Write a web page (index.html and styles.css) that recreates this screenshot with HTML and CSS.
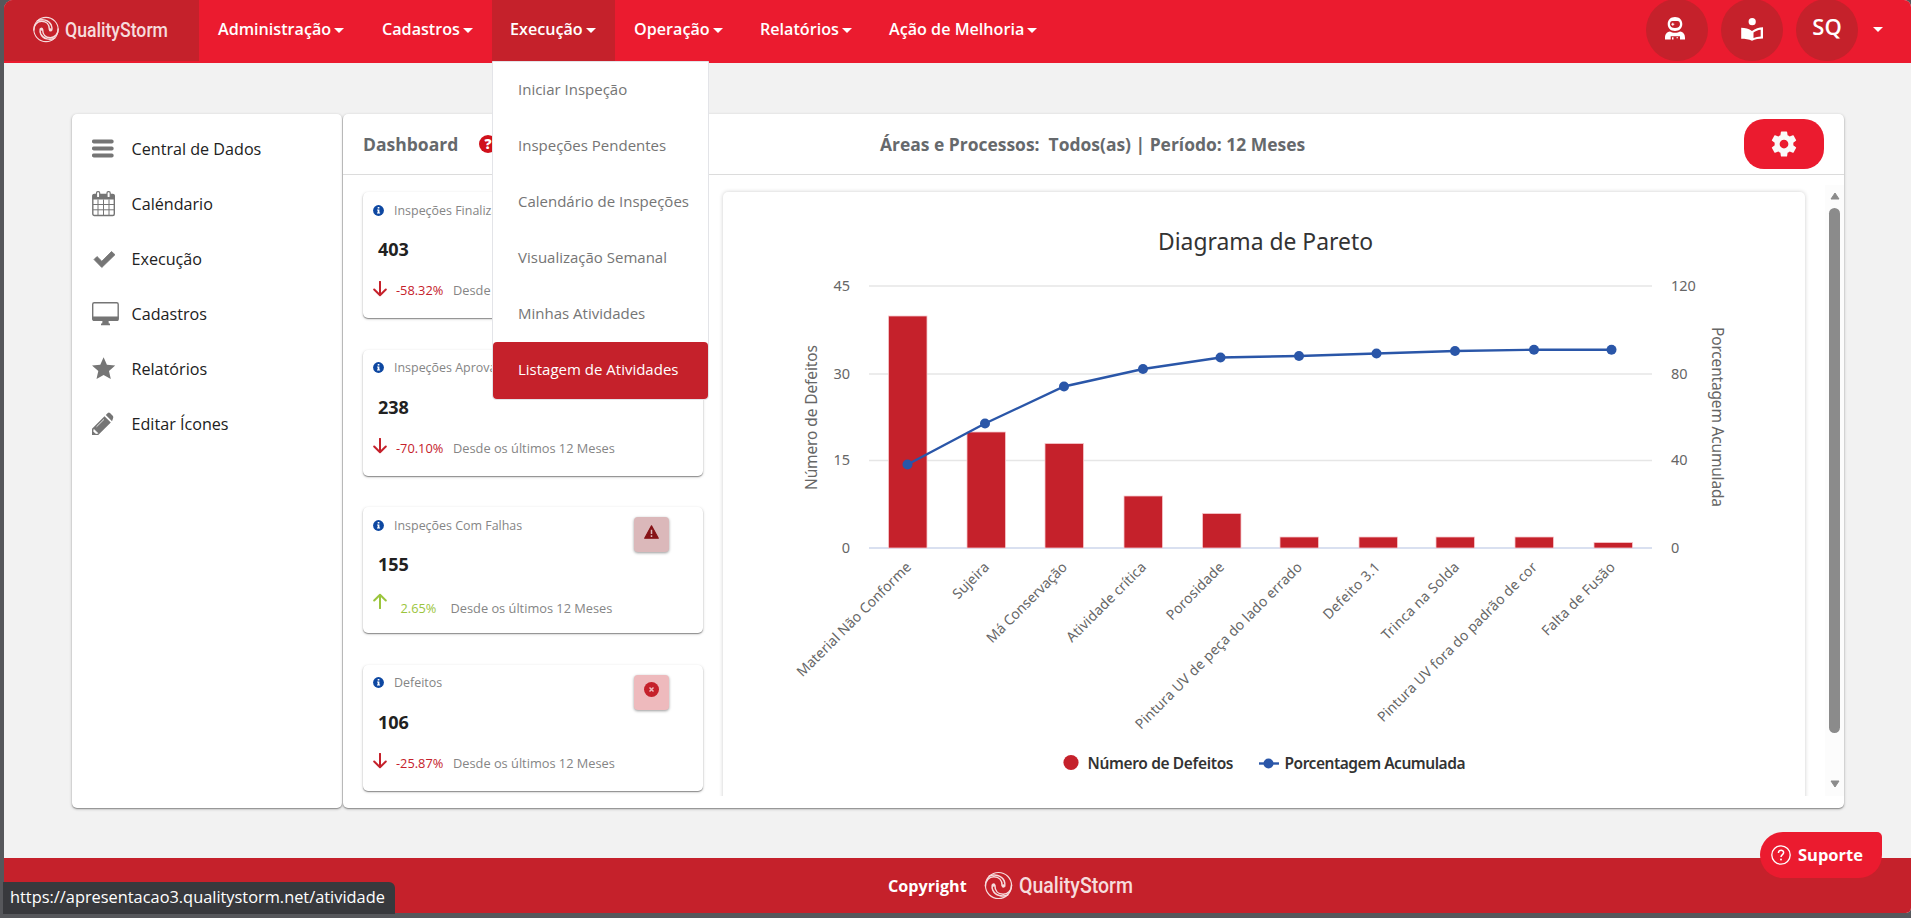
FILE: index.html
```
<!DOCTYPE html>
<html lang="pt-BR">
<head>
<meta charset="utf-8">
<title>QualityStorm</title>
<link rel="stylesheet" href="styles.css">
</head>
<body>
<svg class="defs" width="0" height="0">
  <symbol id="swirl" viewBox="0 0 28 28">
    <circle cx="14" cy="14" r="12.600" fill="none" stroke="currentColor" stroke-width="1.100"/>
    <g fill="none" stroke="currentColor" stroke-width="1.500" stroke-linecap="round">
      <path d="M1.400 14.500C1.400 9 5 5.500 9.500 5.500C14.500 5.500 17.500 9 17.500 14"/>
      <path d="M5 5C10 2.500 17 4 19.500 9.500C20.300 11.500 20.300 13 20 14.500"/>
      <path d="M26.600 13.500C26.600 19 23 22.500 18.500 22.500C13.500 22.500 10.500 19 10.500 14"/>
      <path d="M23 23C18 25.500 11 24 8.500 18.500C7.700 16.500 7.700 15 8 13.500"/>
    </g>
    <circle cx="9.300" cy="13.600" r="1.700" fill="currentColor"/><circle cx="18.700" cy="14.400" r="1.700" fill="currentColor"/>
  </symbol>
  <symbol id="info" viewBox="0 0 11 11">
    <circle cx="5.500" cy="5.500" r="5.400" fill="#0d47a1"/>
    <path d="M4.700 2h1.700v1.500H4.700zM4.100 4.400h2.300v3h.7v1.100H4V7.400h.7V5.500h-.6z" fill="#fff"/>
  </symbol>
  <symbol id="arrow" viewBox="0 0 14 16">
    <path d="M7 .8V14M1.200 8.500L7 14.300L12.800 8.500" fill="none" stroke="currentColor" stroke-width="2" stroke-linecap="round" stroke-linejoin="round"/>
  </symbol>
</svg>
<div class="window">
  <header class="navbar">
    <a class="brand"><svg class="swirl"><use href="#swirl"/></svg><svg class="word" width="112" height="34"><text x="0" y="21" textLength="103" lengthAdjust="spacingAndGlyphs">QualityStorm</text></svg></a>
    <nav class="menu">
      <a class="m1">Administração<i class="caret"></i></a>
      <a class="m2">Cadastros<i class="caret"></i></a>
      <div class="open"><a class="m3">Execução<i class="caret"></i></a>
        <ul class="dropdown">
          <li>Iniciar Inspeção</li>
          <li>Inspeções Pendentes</li>
          <li>Calendário de Inspeções</li>
          <li>Visualização Semanal</li>
          <li>Minhas Atividades</li>
          <li class="active">Listagem de Atividades</li>
        </ul>
      </div>
      <a class="m4">Operação<i class="caret"></i></a>
      <a class="m5">Relatórios<i class="caret"></i></a>
      <a class="m6">Ação de Melhoria<i class="caret"></i></a>
    </nav>
    <div class="tools">
      <span class="round"><svg width="20" height="24" viewBox="0 0 20 24" fill="#fff">
        <path fill-rule="evenodd" d="M10 0C14.400 0 17.300 2.800 17.300 7S14.400 14 10 14S2.700 11.200 2.700 7S5.600 0 10 0ZM7.500 4C5.900 4 5 5.200 5 7.300S6.600 11 10 11S15 9.400 15 7.300S14.100 4 12.500 4Z"/>
        <path d="M7.300 5.700h1v1h1v1h-1v1h-1v-1h-1v-1h1z"/>
        <path fill-rule="evenodd" d="M5 14.500C7.500 16.200 12.500 16.200 15 14.500C18.500 15 20 17.500 20 21V22.500H15V19.200H5.700V22.500H0V21C0 17.500 1.500 15 5 14.500Z"/>
        <path d="M7 20.200h1.500v2.300H7zM11.500 20.200h1.500v1h-1.500z"/>
      </svg></span>
      <span class="round"><svg width="22" height="23" viewBox="0 0 22 23">
        <circle cx="11.200" cy="3.700" r="3.600" fill="#fff"/>
        <path d="M.2 9.800C4 9.800 8 10.500 11 13C14 10.500 18 9.200 22 9.200V20.500C18 20.500 14 21.200 11 22.800C8 21.200 4 20.800 .2 20.800Z" fill="#fff"/>
        <path d="M12.500 14.500C14.500 13 17 12 19.700 11.700V18.400C17 18.500 14.600 19 12.500 20Z" fill="#c5212b"/>
      </svg></span>
      <span class="round sq">SQ</span>
      <i class="caret"></i>
    </div>
  </header>
  <main class="content">
    <aside class="sidebar">
      <a><svg width="28" height="28" viewBox="0 0 28 28"><path d="M1.800 6.500h18M1.800 13.500h18M1.800 20.500h18" stroke="#757575" stroke-width="3.800" stroke-linecap="round"/></svg>Central de Dados</a>
      <a><svg width="28" height="28" viewBox="0 0 28 28"><rect x=".8" y="4.500" width="21.500" height="21" rx="1.500" fill="#fff" stroke="#757575" stroke-width="1.400"/><path d="M.5 5h22v4.500H.5z" fill="#757575"/><path d="M6 9.500v15.500M11.500 9.500v15.500M17 9.500v15.500M1 14.500h21M1 19.800h21" stroke="#757575"/><rect x="4.500" y="1.700" width="3.200" height="6" rx="1.300" fill="#fff" stroke="#757575" stroke-width="1.200"/><rect x="15" y="1.700" width="3.200" height="6" rx="1.300" fill="#fff" stroke="#757575" stroke-width="1.200"/></svg>Caléndario</a>
      <a><svg width="28" height="28" viewBox="0 0 28 28"><path d="M2 14.500L5 11.500L9.800 16.200L19.500 6.500L23 9.700L9.800 22.500Z" fill="#757575" stroke="#757575" stroke-linejoin="round" stroke-width=".8"/></svg>Execução</a>
      <a><svg width="28" height="28" viewBox="0 0 28 28"><rect x=".7" y="2.700" width="25.500" height="17.600" rx="1.500" fill="#fff" stroke="#757575" stroke-width="1.400"/><path d="M.5 16.500h26V19.500q0 1.500-1.500 1.500H2Q.5 21 .5 19.500zM10.500 20.500h6l.3 3h1.200v1.800H9V23.500h1.200z" fill="#757575"/></svg>Cadastros</a>
      <a><svg width="28" height="28" viewBox="0 0 28 28"><path d="M11.600 2.200L14.900 9.800L23.200 10.600L17 16L18.800 24L11.600 19.900L4.500 24L6.300 16L0 10.600L8.300 9.800Z" fill="#757575"/></svg>Relatórios</a>
      <a><svg width="28" height="28" viewBox="0 0 28 28"><path d="M0 25V18.800L12.500 6.300L18.800 12.600L6.200 25ZM13.800 5L15.800 3Q17 2.200 18 3L21 6Q21.600 7.300 21 8.500L20 11.300Z" fill="#757575"/><path d="M2 19.500L5.800 23.300L4 23.500L1.700 21.500ZM4.500 16.800L12 9.400" stroke="#fff" fill="#fff" stroke-width=".8"/></svg>Editar Ícones</a>
    </aside>
    <section class="panel">
      <div class="panel-head">
        <h1>Dashboard</h1>
        <span class="help">?</span>
        <h2>Áreas e Processos:&nbsp; Todos(as) | Período: 12 Meses</h2>
        <button class="gear"><svg width="30" height="30" viewBox="0 0 24 24" fill="#fafafa"><path d="M12,15.500A3.500,3.500 0 0,1 8.500,12A3.500,3.500 0 0,1 12,8.500A3.500,3.500 0 0,1 15.500,12A3.500,3.500 0 0,1 12,15.500M19.430,12.970C19.470,12.650 19.500,12.330 19.500,12C19.500,11.670 19.470,11.340 19.430,11L21.540,9.370C21.730,9.220 21.780,8.950 21.660,8.730L19.660,5.270C19.540,5.050 19.270,4.960 19.050,5.050L16.560,6.050C16.040,5.660 15.500,5.320 14.870,5.070L14.500,2.420C14.460,2.180 14.250,2 14,2H10C9.750,2 9.540,2.180 9.500,2.420L9.130,5.070C8.500,5.320 7.960,5.660 7.440,6.050L4.950,5.050C4.730,4.960 4.460,5.050 4.340,5.270L2.340,8.730C2.210,8.950 2.270,9.220 2.460,9.370L4.570,11C4.530,11.340 4.500,11.670 4.500,12C4.500,12.330 4.530,12.650 4.570,12.970L2.460,14.630C2.270,14.780 2.210,15.050 2.340,15.270L4.340,18.730C4.460,18.950 4.730,19.030 4.950,18.950L7.440,17.940C7.960,18.340 8.500,18.680 9.130,18.930L9.500,21.580C9.540,21.820 9.750,22 10,22H14C14.250,22 14.460,21.820 14.500,21.580L14.870,18.930C15.500,18.670 16.040,18.340 16.560,17.940L19.050,18.950C19.270,19.030 19.540,18.950 19.660,18.730L21.660,15.270C21.780,15.050 21.730,14.780 21.540,14.630L19.430,12.970Z"/></svg></button>
      </div>
      <div class="panel-body">
        <div class="stats">
          <article class="stat">
            <div class="label"><svg><use href="#info"/></svg>Inspeções Finalizadas</div>
            <strong>403</strong>
            <div class="trend down"><svg><use href="#arrow"/></svg><b>-58.32%</b><span>Desde os últimos 12 Meses</span></div>
          </article>
          <article class="stat">
            <div class="label"><svg><use href="#info"/></svg>Inspeções Aprovadas</div>
            <strong>238</strong>
            <div class="trend down"><svg><use href="#arrow"/></svg><b>-70.10%</b><span>Desde os últimos 12 Meses</span></div>
          </article>
          <article class="stat">
            <div class="label"><svg><use href="#info"/></svg>Inspeções Com Falhas</div>
            <strong>155</strong>
            <div class="trend up"><svg><use href="#arrow"/></svg><b>2.65%</b><span>Desde os últimos 12 Meses</span></div>
            <div class="badge warn"><svg width="15" height="14" viewBox="0 0 15 14"><path d="M7.500 .8L14.300 13.200H.7Z" fill="#861317" stroke="#861317" stroke-width="1.200" stroke-linejoin="round"/><path d="M7.500 4.700v4.300M7.500 10.300v1.700" stroke="#dbb8ba" stroke-width="1.500"/></svg></div>
          </article>
          <article class="stat">
            <div class="label"><svg><use href="#info"/></svg>Defeitos</div>
            <strong>106</strong>
            <div class="trend down"><svg><use href="#arrow"/></svg><b>-25.87%</b><span>Desde os últimos 12 Meses</span></div>
            <div class="badge fail"><svg width="15" height="15" viewBox="0 0 15 15"><circle cx="7.500" cy="7.500" r="7.500" fill="#c5212b"/><path d="M5.500 5.500l4 4M9.500 5.500l-4 4" stroke="#eebabd" stroke-width="1.500"/></svg></div>
          </article>
        </div>
        <div class="chart-card">
          <svg class="chart" width="1082" height="612" viewBox="723 192 1082 612">
            <text class="title" x="1158" y="250" textLength="215" lengthAdjust="spacingAndGlyphs">Diagrama de Pareto</text>
            <path d="M869 286H1652M869 374H1652M869 460.500H1652" stroke="#e6e6e6" stroke-width="1.300"/>
            <path d="M869 548H1652" stroke="#ccd6eb" stroke-width="1.500"/>
            <g class="bars">
              <rect x="888.500" y="316" width="38.500" height="232"/>
              <rect x="967" y="432" width="38.500" height="116"/>
              <rect x="1045" y="443.500" width="38.500" height="104.500"/>
              <rect x="1124" y="496" width="38.500" height="52"/>
              <rect x="1202.500" y="513.500" width="38.500" height="34.500"/>
              <rect x="1280" y="537" width="38.500" height="11"/>
              <rect x="1359" y="537" width="38.500" height="11"/>
              <rect x="1436" y="537" width="38.500" height="11"/>
              <rect x="1515" y="537" width="38.500" height="11"/>
              <rect x="1594" y="542.500" width="38.500" height="5.500"/>
            </g>
            <path d="M907.500 464.500L985 423.500L1064 386.500L1143 369L1220.500 357.500L1299 356L1376.500 353.500L1455 351L1534 349.700L1611.500 349.700" fill="none" stroke="#2a56a8" stroke-width="2.400"/>
            <g fill="#2a56a8"><circle cx="907.500" cy="464.500" r="5"/><circle cx="985" cy="423.500" r="5"/><circle cx="1064" cy="386.500" r="5"/><circle cx="1143" cy="369" r="5"/><circle cx="1220.500" cy="357.500" r="5"/><circle cx="1299" cy="356" r="5"/><circle cx="1376.500" cy="353.500" r="5"/><circle cx="1455" cy="351" r="5"/><circle cx="1534" cy="349.700" r="5"/><circle cx="1611.500" cy="349.700" r="5"/></g>
            <g class="tick" text-anchor="end">
              <text x="850" y="291">45</text><text x="850" y="379">30</text><text x="850" y="465">15</text><text x="850" y="553">0</text>
            </g>
            <g class="tick">
              <text x="1671" y="291">120</text><text x="1671" y="379">80</text><text x="1671" y="465">40</text><text x="1671" y="553">0</text>
            </g>
            <g class="cat" text-anchor="end">
              <text transform="translate(912 568) rotate(-45)" textLength="155">Material Não Conforme</text>
              <text transform="translate(990 568) rotate(-45)" textLength="45">Sujeira</text>
              <text transform="translate(1068 568) rotate(-45)" textLength="107">Má Conservação</text>
              <text transform="translate(1147 568) rotate(-45)" textLength="106">Atividade crítica</text>
              <text transform="translate(1225 568) rotate(-45)" textLength="75">Porosidade</text>
              <text transform="translate(1303 568) rotate(-45)" textLength="229">Pintura UV de peça do lado errado</text>
              <text transform="translate(1381 568) rotate(-45)" textLength="74">Defeito 3.1</text>
              <text transform="translate(1460 568) rotate(-45)" textLength="103">Trinca na Solda</text>
              <text transform="translate(1538 568) rotate(-45)" textLength="219">Pintura UV fora do padrão de cor</text>
              <text transform="translate(1616 568) rotate(-45)" textLength="97">Falta de Fusão</text>
            </g>
            <text class="axis" transform="translate(817 490) rotate(-90)" textLength="145">Número de Defeitos</text>
            <text class="axis" transform="translate(1712 327) rotate(90)" textLength="180">Porcentagem Acumulada</text>
            <circle cx="1071" cy="762.500" r="7.600" fill="#c5212b"/>
            <text class="legend" x="1087.500" y="769" textLength="146">Número de Defeitos</text>
            <path d="M1259 763.500h20" stroke="#2a56a8" stroke-width="2.400"/><circle cx="1268.500" cy="763.500" r="5" fill="#2a56a8"/>
            <text class="legend" x="1284.500" y="769" textLength="181">Porcentagem Acumulada</text>
          </svg>
        </div>
        <div class="scrollbar">
          <svg width="10" height="8" viewBox="0 0 10 8"><path d="M5 1L9 7H1Z" fill="#8b8b8b" stroke="#8b8b8b" stroke-linejoin="round"/></svg>
          <i></i>
          <svg width="10" height="8" viewBox="0 0 10 8"><path d="M1 1H9L5 7Z" fill="#8b8b8b" stroke="#8b8b8b" stroke-linejoin="round"/></svg>
        </div>
      </div>
    </section>
  </main>
  <footer class="footer">
    <span>Copyright</span>
    <svg class="swirl big"><use href="#swirl"/></svg><svg class="word big" width="124" height="34"><text x="0" y="24" textLength="114" lengthAdjust="spacingAndGlyphs">QualityStorm</text></svg>
  </footer>
</div>
<div class="status">https://apresentacao3.qualitystorm.net/atividade</div>
<button class="support"><svg width="20" height="20" viewBox="0 0 20 20"><circle cx="10" cy="10" r="9.200" fill="none" stroke="#fff" stroke-width="1.300"/><path d="M7.400 8C7.400 4.300 12.800 4.500 12.600 7.800C12.500 9.600 10 9.700 10 12" fill="none" stroke="#fff" stroke-width="1.500"/><circle cx="10" cy="14.400" r="1" fill="#fff"/></svg>Suporte</button>
</body>
</html>
```
FILE: styles.css
```
* { box-sizing: border-box; }
body {
  margin: 0;
  width: 1911px;
  height: 918px;
  padding: 0 0 5px 4px;
  overflow: hidden;
  background: #56575b;
  font-family: "Open Sans", "Noto Sans", sans-serif;
}
.defs { position: absolute; }
.window {
  display: flex;
  flex-direction: column;
  height: 913px;
  background: #f2f2f2;
  border-radius: 9px 7px 5px 0;
  overflow: hidden;
}

/* Top bar */
.navbar { display: flex; height: 63px; background: #eb1b2f; color: #fff; flex: none; }
.brand { display: flex; width: 195px; height: 61px; padding: 16px 0 0 28px; background: #c5212b; color: #f6dcdd; }
.swirl { width: 28px; height: 27px; margin-right: 5px; flex: none; }
.word { font: 500 20.500px Roboto, sans-serif; fill: #f6dcdd; overflow: visible; flex: none; }
.menu { display: flex; font-size: 16.150px; font-weight: 600; height: 61px; }
.menu a { display: flex; align-items: center; height: 58px; white-space: nowrap; padding-left: 19px; }
.m1 { width: 164px; }
.m2 { width: 129px; }
.m3 { width: 123px; }
.m4 { width: 126px; }
.m5 { width: 129px; }
.m6 { width: 200px; }
.menu a.m3 { padding-left: 18px; }
.open { position: relative; background: #c5212b; height: 61px; }
.caret { border: 5px solid transparent; border-top-color: currentColor; border-bottom: 0; margin: 3px 0 0 3px; }
.dropdown {
  position: absolute;
  z-index: 5;
  left: 0;
  top: 61px;
  width: 217px;
  margin: 0;
  padding: 0;
  list-style: none;
  background: #fff;
  border: 1px solid #e3e4e8;
  border-radius: 0 0 4px 4px;
  font-size: 15px;
  font-weight: 400;
  color: #757575;
}
.dropdown li { height: 56.100px; line-height: 54.500px; padding-left: 25px; white-space: nowrap; }
.dropdown .active { background: #c5212b; color: #fff; border-radius: 4px; font-weight: 500; }
.tools { display: flex; gap: 13px; margin-left: auto; padding-right: 28px; margin-top: -1px; }
.round { display: flex; width: 62px; height: 62px; border-radius: 50%; background: #c5212b; align-items: center; justify-content: center; }
.round svg { margin-top: -2px; margin-right: 4px; }
.round + .round svg { margin-right: 0; }
.sq { font-size: 22px; font-weight: 600; padding-bottom: 9px; }
.tools .caret { margin: 28px 0 0 2px; }

/* Main area */
.content { display: flex; gap: 1px; padding: 51px 67px 0 68px; height: 795px; flex: none; }
.sidebar, .panel { height: 694px; background: #fff; border-radius: 5px; box-shadow: 0 1px 3px rgba(0,0,0,.3), 0 1px 1px rgba(0,0,0,.25); }
.sidebar { width: 270px; padding: 7px 0 0 20px; }
.sidebar a { display: flex; align-items: center; height: 55px; font-size: 16.150px; color: #212121; }
.sidebar svg { margin-right: 11.500px; }
.panel { flex: 1; }
.panel-head { display: flex; align-items: center; height: 61px; border-bottom: 1px solid #dcdcdc; padding: 0 20px; color: #66696c; }
h1, h2 { margin: 0; font-weight: 700; white-space: nowrap; }
h1 { font-size: 17.500px; width: 116px; }
h2 { font-size: 17.450px; margin-left: 383px; }
.help { width: 18px; height: 18px; border-radius: 50%; background: #d0111b; color: #fff; font: 800 14px/18px "Open Sans", sans-serif; text-align: center; }
.gear { margin-left: auto; width: 80px; height: 50px; border: 0; border-radius: 20px; background: #eb1b2f; padding: 0; display: flex; align-items: center; justify-content: center; }
.panel-body { display: flex; height: 611px; margin-top: 10px; overflow: hidden; padding: 7px 0 0 20px; }
.stats { display: flex; flex-direction: column; gap: 31.600px; width: 340px; }
.stat { position: relative; flex: none; height: 126px; padding: 8px 10px; border-radius: 5px; background: #fff; box-shadow: 0 1px 3px rgba(0,0,0,.22), 0 1px 1px rgba(0,0,0,.35); }
.label { display: flex; align-items: center; height: 20px; font-size: 12.450px; color: #858585; }
.label svg { width: 11px; height: 11px; margin-right: 10px; }
.stat strong { display: block; margin: 17px 0 0 5px; height: 26px; line-height: 25px; font-size: 18px; color: #212121; }
.trend { display: flex; align-items: center; height: 24px; margin-top: 15px; font-size: 12.800px; color: #858585; }
.trend svg { width: 14px; height: 16px; margin-right: 9px; margin-top: -3px; }
.trend b { font-weight: 400; width: 57px; }
.down svg, .down b { color: #c5212b; }
.up { margin-top: 18px; }
.up svg, .up b { color: #9bc53d; }
.up svg { transform: rotate(180deg); margin-top: -15px; margin-right: 13.500px; }
.up b { width: 50px; }
.badge { position: absolute; right: 34px; top: 10px; width: 35px; height: 35px; border-radius: 4px; display: flex; justify-content: center; padding-top: 8px; box-shadow: 0 1px 3px rgba(0,0,0,.4); }
.warn { background: #dbb8ba; }
.fail { background: #eebabd; padding-top: 7px; }
.chart-card { width: 1082px; margin-left: 20px; height: 620px; flex: none; border-radius: 5px; box-shadow: 0 0 4px rgba(0,0,0,.2); }
.chart { display: block; font-family: "Noto Sans", "Open Sans", sans-serif; fill: #666; }
.title { font-size: 23px; fill: #333; }
.tick { font-size: 14.500px; }
.cat { font-size: 14px; }
.axis { font-size: 15.500px; }
.legend { font-size: 15.500px; font-weight: 600; fill: #333; }
.bars rect { fill: #c5212b; stroke: #f6c9cd; stroke-width: .8; }
.scrollbar { display: flex; flex-direction: column; align-items: center; width: 19px; height: 611px; margin: -7px 0 0 20px; padding: 7px 0; background: #fcfcfc; }
.scrollbar i { width: 11px; height: 525px; margin: 8px 0 47px; border-radius: 6px; background: #8b8b8b; }

/* Footer and floating parts */
.footer { display: flex; align-items: center; height: 55px; padding-left: 884px; background: #c5212b; color: #fff; font-size: 16.150px; font-weight: 700; }
.footer span { width: 95px; }
.swirl.big { width: 31px; height: 29px; color: #f6dcdd; }
.word.big { font-size: 22.500px; }
.status { position: absolute; left: 3px; top: 882px; width: 392px; height: 32px; padding-left: 7px; border-radius: 0 6px 0 0; background: #38393d; color: #fff; font: 16.380px/31px "Open Sans", sans-serif; }
.support { position: absolute; left: 1760px; top: 832px; width: 122px; height: 46px; border: 0; border-radius: 23px 5px 23px 23px; background: #eb1b2f; color: #fff; display: flex; align-items: center; gap: 7px; padding: 0 0 1px 11px; font: 700 16.500px "Open Sans", sans-serif; }
```
